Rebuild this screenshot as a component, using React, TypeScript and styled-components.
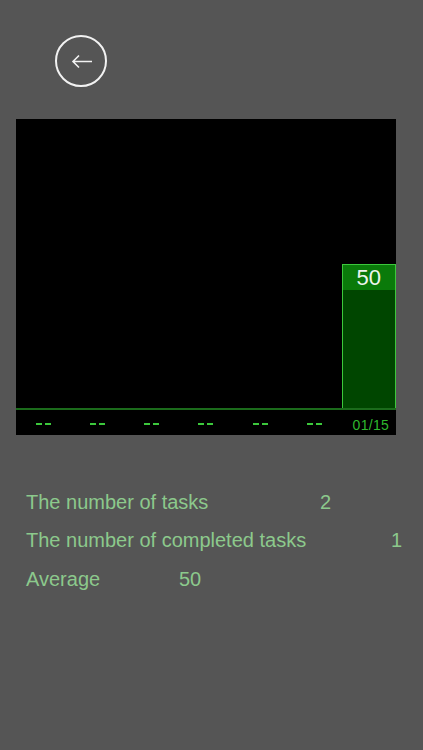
import styled, { createGlobalStyle } from 'styled-components';

const GlobalStyle = createGlobalStyle`
	html, body {
		margin: 0;
		padding: 0;
		background: #555555;
		font-family: 'Liberation Sans', Arial, sans-serif;
	}
`;

type Day = { label: string; value: number | null };

const days: Day[] = [
	{ label: '--', value: null },
	{ label: '--', value: null },
	{ label: '--', value: null },
	{ label: '--', value: null },
	{ label: '--', value: null },
	{ label: '--', value: null },
	{ label: '01/15', value: 50 },
];

const stats = [
	{ label: 'The number of tasks', value: '2', valueAt: 294 },
	{ label: 'The number of completed tasks', value: '1', valueAt: 365 },
	{ label: 'Average', value: '50', valueAt: 153 },
];

function BackIcon() {
	return (
		<svg width="24" height="16" viewBox="0 0 24 16" fill="none">
			<path d="M22 8.5H3M9 2.5L3 8.5L9 14.5" stroke="#f2f2f2" strokeWidth="1.6" />
		</svg>
	);
}

export default function App() {
	return (
		<Page>
			<GlobalStyle />
			<Header>
				<BackButton>
					<BackIcon />
				</BackButton>
			</Header>
			<Chart>
				<Plot>
					{days.map((d, i) => (
						<Column key={i}>
							{d.value !== null && (
								<Bar style={{ height: `${d.value}%` }}>
									<BarValue>{d.value}</BarValue>
								</Bar>
							)}
						</Column>
					))}
				</Plot>
				<Baseline />
				<Labels>
					{days.map((d, i) =>
						d.value === null ? (
							<Label key={i}>
								<Dash />
								<Dash />
							</Label>
						) : (
							<Label key={i}>
								<DateText>{d.label}</DateText>
							</Label>
						)
					)}
				</Labels>
			</Chart>
			<Stats>
				{stats.map((s) => (
					<StatRow key={s.label} $valueAt={s.valueAt}>
						<span>{s.label}</span>
						<span>{s.value}</span>
					</StatRow>
				))}
			</Stats>
		</Page>
	);
}

const Page = styled.div`
	width: 423px;
	height: 750px;
	background: #555555;
	overflow: hidden;
`;

const Header = styled.header`
	padding: 35px 0 0 55px;
	height: 52px;
`;

const BackButton = styled.button`
	width: 52px;
	height: 52px;
	border-radius: 50%;
	border: 2px solid #f2f2f2;
	background: transparent;
	display: flex;
	align-items: center;
	justify-content: center;
	padding: 0 0 0 1px;
`;

const Chart = styled.div`
	margin: 32px 0 0 16px;
	width: 380px;
	height: 316px;
	background: #000;
	display: flex;
	flex-direction: column;
`;

const Plot = styled.div`
	height: 289px;
	display: grid;
	grid-template-columns: repeat(7, 1fr);
`;

const Column = styled.div`
	display: flex;
	flex-direction: column;
	justify-content: flex-end;
`;

const Bar = styled.div`
	box-sizing: border-box;
	background: #004600;
	border: 1px solid #3cc83c;
	border-bottom: none;
`;

const BarValue = styled.div`
	height: 25px;
	background: #0a7a0a;
	color: #eef5ee;
	font-size: 22px;
	line-height: 26px;
	text-align: center;
`;

const Baseline = styled.div`
	height: 2px;
	background: #1b6b1b;
`;

const Labels = styled.div`
	flex: 1;
	display: grid;
	grid-template-columns: repeat(7, 1fr);
`;

const Label = styled.div`
	display: flex;
	align-items: center;
	justify-content: center;
	gap: 3px;
	padding-top: 3px;
`;

const Dash = styled.span`
	width: 6px;
	height: 2px;
	background: #3cc83c;
`;

const DateText = styled.span`
	color: #2eb82e;
	font-size: 14px;
	letter-spacing: 0.3px;
	padding: 2px 0 0 4px;
`;

const Stats = styled.div`
	margin-top: 48px;
	padding-left: 26px;
	display: flex;
	flex-direction: column;
`;

const StatRow = styled.div<{ $valueAt: number }>`
	display: grid;
	grid-template-columns: ${({ $valueAt }) => $valueAt}px auto;
	height: 38.5px;
	align-items: center;
	color: #8cc98c;
	font-size: 20px;
`;
